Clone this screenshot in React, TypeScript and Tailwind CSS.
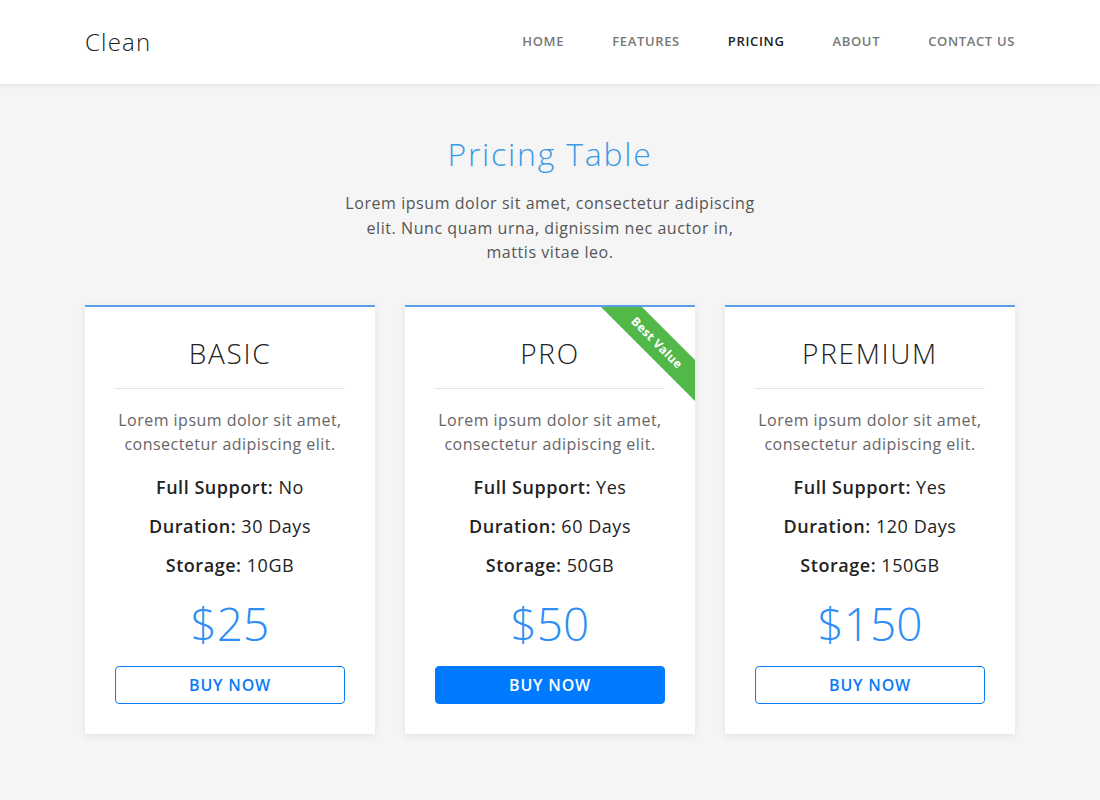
import React from 'react';

type Plan = {
  name: string;
  support: string;
  duration: string;
  storage: string;
  price: string;
  featured?: boolean;
};

const plans: Plan[] = [
  { name: 'BASIC', support: 'No', duration: '30 Days', storage: '10GB', price: '$25' },
  { name: 'PRO', support: 'Yes', duration: '60 Days', storage: '50GB', price: '$50', featured: true },
  { name: 'PREMIUM', support: 'Yes', duration: '120 Days', storage: '150GB', price: '$150' }
];

const navItems = ['HOME', 'FEATURES', 'PRICING', 'ABOUT', 'CONTACT US'];

const PlanCard: React.FC<{ plan: Plan }> = ({ plan }) => (
  <div className="relative overflow-hidden bg-white border-t-2 border-[#5a9fe9] shadow-[0_2px_8px_rgba(0,0,0,0.08)] px-[30px] pt-[29px] pb-[30px] text-center">
    {plan.featured && (
      <div className="absolute left-[172px] top-[21px] w-[160px] h-[29px] rotate-45 bg-[#52b848] text-white text-[12px] font-bold tracking-[0.03em] leading-[29px] text-center">
        Best Value
      </div>
    )}
    <h2 className="text-[28px] leading-[34px] font-light tracking-[0.06em] text-[#222]">{plan.name}</h2>
    <div className="mt-[18px] h-px bg-[#e5e5e5]" />
    <p className="mt-[19px] text-[16px] leading-[24px] tracking-[0.03em] text-[#666]">
      Lorem ipsum dolor sit amet, consectetur adipiscing elit.
    </p>
    <div className="mt-[19px] flex flex-col gap-[15px] text-[18px] leading-[24px] tracking-[0.03em] text-[#222]">
      <div>
        <span className="font-semibold">Full Support:</span> {plan.support}
      </div>
      <div>
        <span className="font-semibold">Duration:</span> {plan.duration}
      </div>
      <div>
        <span className="font-semibold">Storage:</span> {plan.storage}
      </div>
    </div>
    <div className="mt-[18px] mb-[2px] text-[46px] leading-[56px] font-light text-[#2d8ef5]">{plan.price}</div>
    <button
      className={
        plan.featured
          ? 'mt-[13px] w-full h-[38px] rounded-[4px] bg-[#007bff] border border-[#007bff] text-white text-[16px] font-semibold tracking-[0.05em]'
          : 'mt-[13px] w-full h-[38px] rounded-[4px] bg-white border border-[#0a7cf7] text-[#0a7cf7] text-[16px] font-semibold tracking-[0.05em]'
      }
    >
      BUY NOW
    </button>
  </div>
);

export default function App() {
  return (
    <div className="min-h-screen bg-[#f5f5f5] font-['Open_Sans',sans-serif]">
      <header className="bg-white h-[84px] shadow-[0_1px_6px_rgba(0,0,0,0.08)]">
        <div className="mx-auto w-[930px] h-full flex items-center justify-between">
          <div className="text-[24px] font-light tracking-[0.05em] text-[#222]">Clean</div>
          <nav className="flex gap-[48px] text-[13px] font-semibold tracking-[0.05em]">
            {navItems.map((item) => (
              <a key={item} className={item === 'PRICING' ? 'text-[#222]' : 'text-[#777]'}>
                {item}
              </a>
            ))}
          </nav>
        </div>
      </header>

      <section className="mx-auto w-[930px] pt-[50px] pb-[66px]">
        <h1 className="text-center text-[32px] leading-[40px] font-light tracking-[0.055em] text-[#3b9be4]">Pricing Table</h1>
        <p className="mx-auto mt-[17px] w-[416px] text-center text-[16px] leading-[24.5px] tracking-[0.035em] text-[#555]">
          Lorem ipsum dolor sit amet, consectetur adipiscing elit. Nunc quam urna, dignissim nec auctor in, mattis vitae leo.
        </p>
        <div className="mt-[40px] grid grid-cols-3 gap-[30px]">
          {plans.map((plan) => (
            <PlanCard key={plan.name} plan={plan} />
          ))}
        </div>
      </section>
    </div>
  );
}
